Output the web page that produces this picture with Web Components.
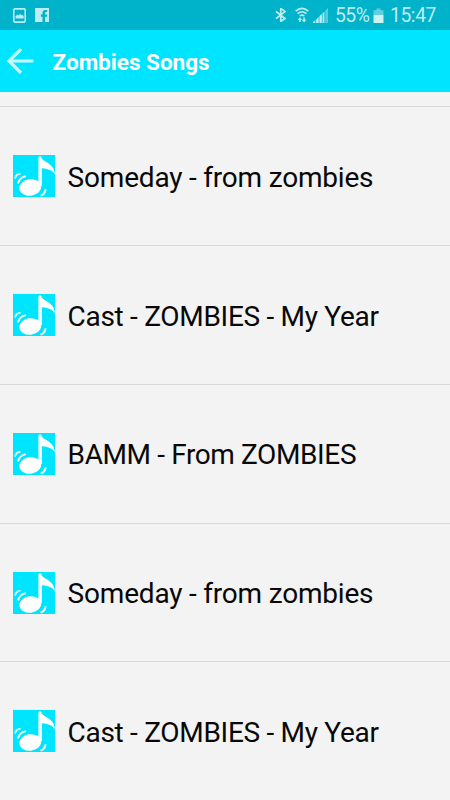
<!DOCTYPE html>
<html lang="en"><head><meta charset="utf-8"><title>Zombies Songs</title>
<style>html,body{margin:0;height:100%;overflow:hidden;background:#f3f3f3;font-family:Roboto,"Liberation Sans",sans-serif}</style>
</head><body>
<song-app></song-app>
<script>
const define = (name, html) => {
  const t = document.createElement('template');
  t.innerHTML = html;
  customElements.define(name, class extends HTMLElement {
    constructor() {
      super();
      this.attachShadow({ mode: 'open' }).appendChild(t.content.cloneNode(true));
    }
  });
};

define('status-bar', `<style>
:host{display:flex;height:30px;box-sizing:border-box;background:#00b2ca;color:#bfecf2;align-items:center;padding:0 13px 0 12px;font-size:19.300px;line-height:30px}
svg{display:block;flex:none}.space{flex:1}.fb{margin-left:8px}
.wifi{margin-left:8.500px}.sig{margin-left:4px}.pct{margin-left:7px;width:36px;letter-spacing:-.5px;white-space:nowrap}.bat{margin-left:2px}.time{margin-left:6px;width:47px;white-space:nowrap;letter-spacing:-.4px}
span{padding-top:1px}
</style>
<svg width="15" height="15" viewBox="0 0 15 15"><rect x="1.8" y=".9" width="11.4" height="13.2" rx="1" fill="none" stroke="#bfecf2" stroke-width="1.6"/><path d="M3.5 10.5V8.2l2-1.7 1.3 1.1L8.3 5.8l1.2 1.6 1-.6 1.2 1.4v2.3z" fill="#bfecf2"/></svg>
<svg class="fb" width="14" height="14" viewBox="0 0 14 14"><path fill="#bfecf2" d="M0 0h14v14h-3.900V8.800h2V6.600h-2V5.200c0-.8.3-1.100 1.100-1.100h1V2h-1.700C8.400 2 7.500 3.100 7.500 4.900v1.700H5.900v2.200h1.600V14H0z"/></svg>
<div class="space"></div>
<svg width="12" height="14" viewBox="0 0 12 14"><path d="M1 3.500l9 7-4.200 3V.6l4.200 3-9 7" fill="none" stroke="#bfecf2" stroke-width="1.700"/></svg>
<svg class="wifi" width="14" height="16" viewBox="0 0 14 16"><g fill="none" stroke="#bfecf2" stroke-width="1.600"><path d="M.6 4.200Q7-1.600 13.400 4.200M2.600 6.700q4.400-3.900 8.800 0M4.700 9q2.300-1.900 4.600 0"/><path d="M4.900 15v-3.500M9.100 10.500V14"/></g><path d="M2.600 13l2.300-2.700L7.200 13zM6.800 12.700l2.300 2.900 2.300-2.900z" fill="#bfecf2"/></svg>
<svg class="sig" width="15" height="15" viewBox="0 0 15 15"><g fill="#bfecf2"><path d="M0 15v-1l2.400-1.700V15zM3.200 15v-3.700l2.500-2V15zM6.400 15V8l2.500-2v9zM9.600 15V5.200l1.800-1.500V15z"/><path d="M12.200 15V2.400L15 0v15z" opacity=".45"/></g></svg>
<span class="pct">55%</span>
<svg class="bat" width="11" height="15" viewBox="0 0 11 15"><path d="M.5 7V2.300h3V.5h4v1.800h3V7z" fill="#65cfdd"/><path d="M.5 7h10v8H.5z" fill="#cdf2f5"/></svg>
<span class="time">15:47</span>`);

define('app-header', `<style>
:host{display:flex;height:62px;background:#00e5ff;align-items:center;color:#fff;padding-left:6px;font-size:22.500px;font-weight:700;border-bottom:1px solid #e5f5f6}
svg{display:block;margin-right:18.500px}h1{margin:1px 0 0;font:inherit;line-height:28px;white-space:nowrap}
</style><svg width="28" height="28" viewBox="0 0 28 28"><path d="M15 2L3 14l12 12M3 14h24.500" fill="none" stroke="#c4f8ff" stroke-width="3.200"/></svg><h1><slot></slot></h1>`);

define('note-icon', `<style>:host{display:block;width:42px;height:42px;flex:none}svg{display:block}</style>
<svg width="42" height="42" viewBox="0 0 42 42"><path fill="#00e5ff" d="M0 0h42v42H0z"/><g fill="#fff"><ellipse cx="17.300" cy="32.500" rx="11" ry="8.200" transform="rotate(-7 17.300 32.500)"/><path d="M25.400 3.300c0-2.800 3.300-2.800 3.300 0 1.300 3.800 13 5 13.100 16.200-1.800-4-7-5.700-12.900-6.200v17.500l-3.500 1z"/></g><g fill="none" stroke="#fff" stroke-linecap="round"><path d="M2.200 23q1.200-4 4.600-4.200" stroke-width="1.700"/><path d="M5.200 27.700q2-5.300 6.900-6.300" stroke-width="1.900"/><path d="M28.300 40.300q3.500-1.500 4.200-5.300" stroke-width="1.900"/></g></svg>`);

define('song-row', `<style>
:host{display:flex;box-sizing:border-box;height:138.750px;border-top:1px solid #dadada;padding-left:13px;align-items:center;color:#080808;font-size:28px}
span{margin-left:12.600px;line-height:36px;white-space:nowrap;padding-top:3px;letter-spacing:var(--tracking,-.2px)}
</style><note-icon></note-icon><span><slot></slot></span>`);

define('song-app', `<style>
:host{display:flex;flex-direction:column;width:450px;height:800px;overflow:hidden}
*{flex-shrink:0}.list{display:flex;flex-direction:column;padding-top:13.400px}
.cast{--tracking:-.3px}.bamm{--tracking:-.38px}
</style><status-bar></status-bar><app-header>Zombies Songs</app-header>
<div class="list"><song-row>Someday - from zombies</song-row><song-row class="cast">Cast - ZOMBIES - My Year</song-row><song-row class="bamm">BAMM - From ZOMBIES</song-row><song-row>Someday - from zombies</song-row><song-row class="cast">Cast - ZOMBIES - My Year</song-row></div>`);
</script></body></html>
